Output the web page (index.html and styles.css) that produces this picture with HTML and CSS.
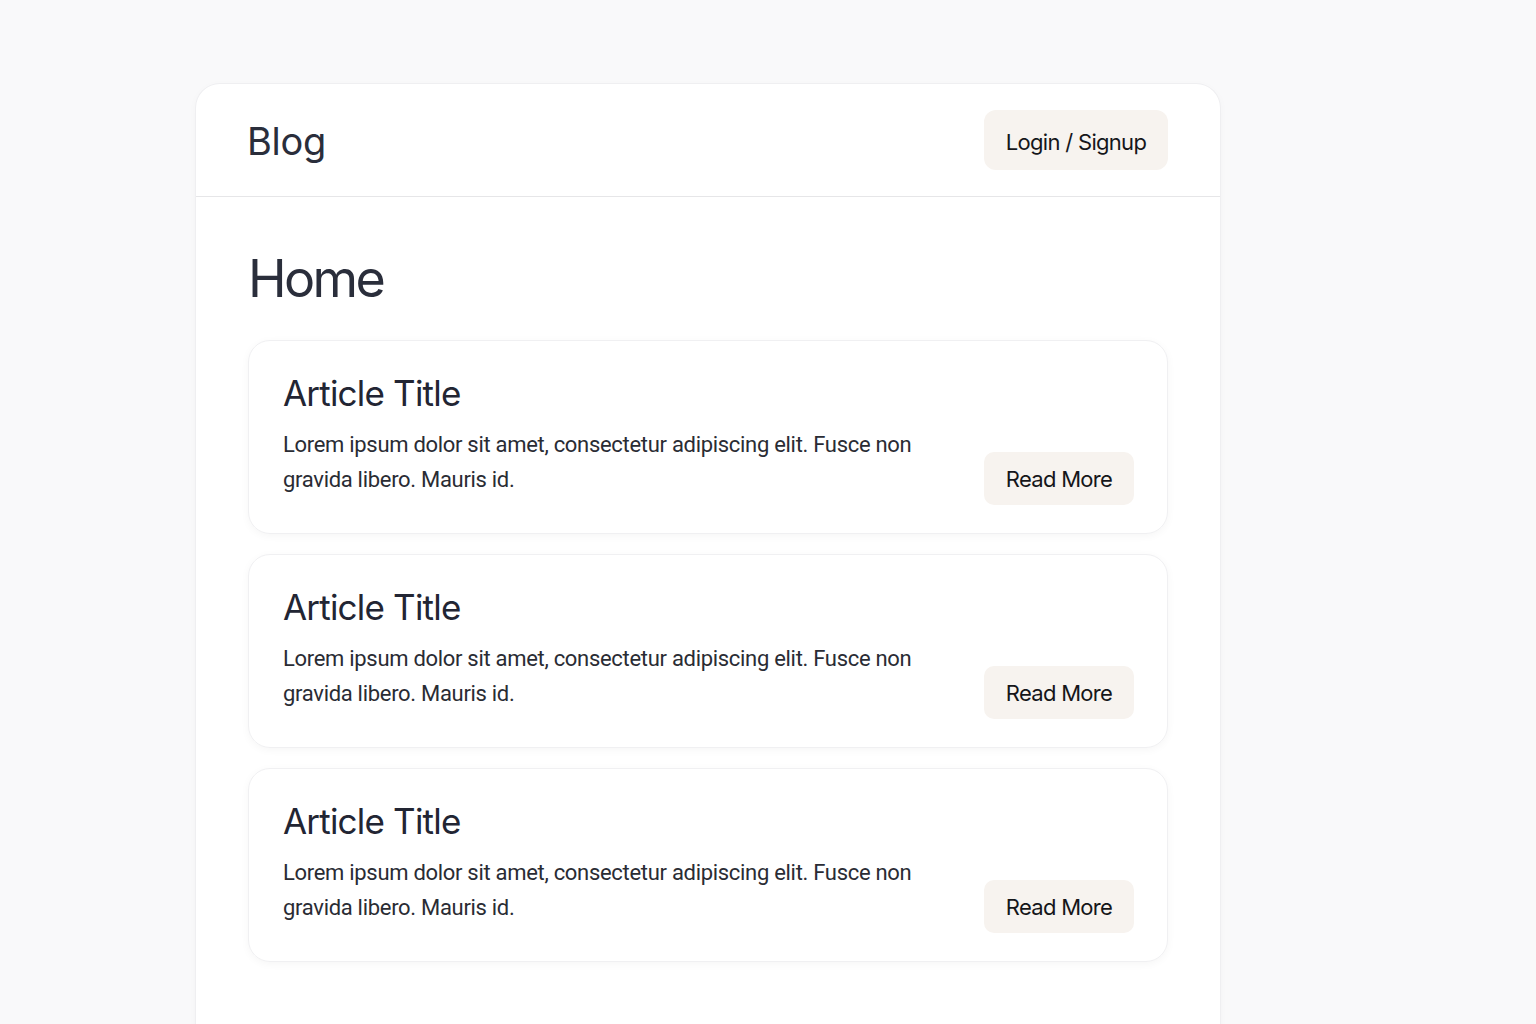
FILE: index.html
```html
<!DOCTYPE html>
<html lang="en">
<head>
<meta charset="utf-8">
<title>Blog</title>
<link rel="stylesheet" href="styles.css">
</head>
<body>
<div class="page">
  <div class="app">
    <header class="header">
      <div class="brand">Blog</div>
      <button class="btn btn-login">Login / Signup</button>
    </header>
    <main class="main">
      <h1 class="page-title">Home</h1>
      <div class="list">
        <article class="card">
          <div class="card-body">
            <h2 class="card-title">Article Title</h2>
            <p class="card-text">Lorem ipsum dolor sit amet, consectetur adipiscing elit. Fusce non gravida libero. Mauris id.</p>
          </div>
          <button class="btn btn-read">Read More</button>
        </article>
        <article class="card">
          <div class="card-body">
            <h2 class="card-title">Article Title</h2>
            <p class="card-text">Lorem ipsum dolor sit amet, consectetur adipiscing elit. Fusce non gravida libero. Mauris id.</p>
          </div>
          <button class="btn btn-read">Read More</button>
        </article>
        <article class="card">
          <div class="card-body">
            <h2 class="card-title">Article Title</h2>
            <p class="card-text">Lorem ipsum dolor sit amet, consectetur adipiscing elit. Fusce non gravida libero. Mauris id.</p>
          </div>
          <button class="btn btn-read">Read More</button>
        </article>
      </div>
    </main>
  </div>
</div>
</body>
</html>
```
FILE: styles.css
```css
html, body {
  margin: 0;
  padding: 0;
  background: #f9f9fa;
  font-family: Inter, "Noto Sans", sans-serif;
  color: #2a2e3b;
}
.page {
  padding-top: 84px;
  padding-left: 196px;
  height: 1024px;
  box-sizing: border-box;
  overflow: hidden;
}
.app {
  width: 1024px;
  height: 1000px;
  background: #ffffff;
  border-radius: 24px 24px 0 0;
  box-shadow: 0 0 0 1px #efeff1, 0 2px 10px rgba(0,0,0,0.03);
}
.header {
  height: 113px;
  box-sizing: border-box;
  display: flex;
  align-items: center;
  justify-content: space-between;
  padding: 0 52px 0 52px;
  border-bottom: 1px solid #e6e6e8;
}
.brand {
  font-size: 38px;
  font-weight: 400;
  letter-spacing: -0.3px;
  color: #2a2e3b;
  margin-top: 2px;
  margin-left: -1px;
}
.btn {
  border: none;
  background: #f7f3ef;
  color: #15161a;
  font-family: Inter, "Noto Sans", sans-serif;
  font-size: 22px;
  letter-spacing: -0.7px;
  cursor: pointer;
  padding: 0;
}
.btn-login {
  width: 184px;
  height: 60px;
  border-radius: 12px;
  padding-top: 3px;
}
.main {
  padding: 52px 52px 0;
}
.page-title {
  margin: 0 0 31px;
  font-size: 52px;
  font-weight: 400;
  line-height: 60px;
  letter-spacing: -2.6px;
  color: #2a2e3b;
}
.list {
  display: flex;
  flex-direction: column;
  gap: 20px;
}
.card {
  height: 194px;
  box-sizing: border-box;
  border: 1px solid #f0f0f2;
  border-radius: 22px;
  box-shadow: 0 2px 8px rgba(0,0,0,0.04);
  padding: 28px 33px 28px 34px;
  display: flex;
  align-items: flex-end;
  justify-content: space-between;
}
.card-body {
  align-self: flex-start;
  width: 660px;
}
.card-title {
  margin: 0 0 10px;
  font-size: 35px;
  font-weight: 400;
  line-height: 48px;
  letter-spacing: -0.8px;
  color: #222533;
}
.card-text {
  margin: 0;
  font-family: Roboto, sans-serif;
  font-size: 22px;
  line-height: 35px;
  letter-spacing: -0.3px;
  color: #2a2c34;
}
.btn-read {
  width: 150px;
  height: 53px;
  border-radius: 10px;
  padding-top: 1px;
}
```
